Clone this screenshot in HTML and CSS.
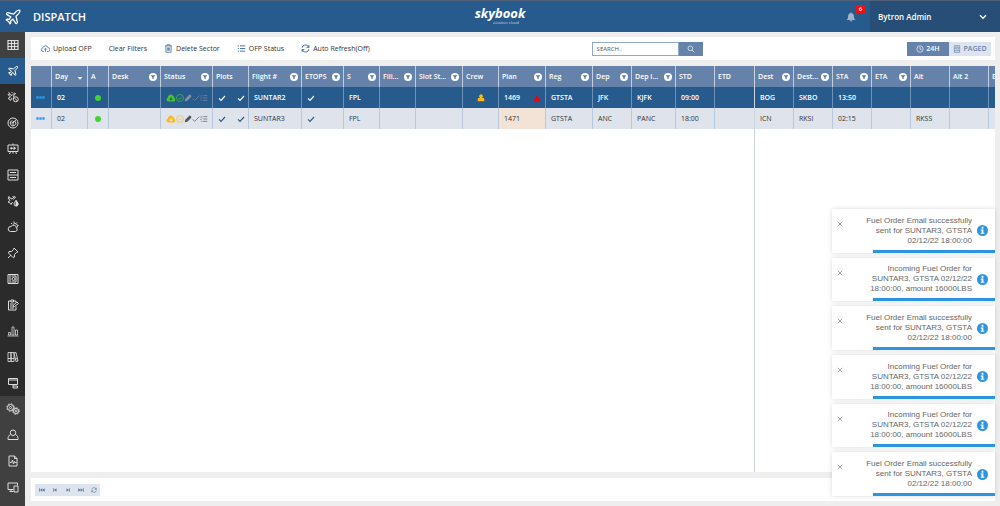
FILE: index.html
```html
<!DOCTYPE html>
<html lang="en">
<head>
<meta charset="utf-8">
<title>Dispatch - skybook</title>
<link rel="stylesheet" href="styles.css">
</head>
<body>
<svg class="sprite" aria-hidden="true">
  <symbol id="plane" viewBox="0 0 24 24"><path d="M17.8 19.2 16 11l3.500-3.500C21 6 21.500 4 21 3c-1-.5-3 0-4.500 1.500L13 8 4.800 6.200c-.5-.1-.9.1-1.100.5l-.3.5c-.2.5-.1 1 .3 1.300L9 12l-2 3H4l-1 1 3 2 2 3 1-1v-3l3-2 3.500 5.300c.3.4.8.5 1.300.3l.5-.2c.4-.3.6-.7.5-1.200z"/></symbol>
  <symbol id="grid" viewBox="0 0 24 24"><path stroke-width="2.400" d="M2 3h20v18H2zM2 9h20M2 15h20M9 3v18M15 3v18"/></symbol>
  <symbol id="plane-clock" viewBox="0 0 24 24"><path d="M10 14 7 19l-2-3-3-1 5-3-5-5 2-1 6 3 5-5 2 1-4 5 1 2M3 3l3 2M9 2l2 2"/><circle cx="17.500" cy="16.500" r="5"/><path d="m14 13 7 7"/></symbol>
  <symbol id="radar" viewBox="0 0 24 24"><circle cx="12" cy="12" r="10"/><path d="M12 12 18.500 5M16.500 9a5.500 5.500 0 1 1-6-2M9 12l6-4M12 12v5"/></symbol>
  <symbol id="board" viewBox="0 0 24 24"><path d="M2 4h20v13H2zM12 1v3M7 17l-2 5M17 17l2 5M12 17v4M6 10.500h11M13 7.500l4 3-4 3M8.500 8v5"/></symbol>
  <symbol id="drawers" viewBox="0 0 24 24"><path d="M2 2h20v20H2zM2 12h20M6 7h12M6 17h12"/></symbol>
  <symbol id="plane-fuel" viewBox="0 0 24 24"><path d="M11 14 8 19l-3-4-3-1 4-3-4-5 2-1 6 3 5-5 2 1-4 5M3 3l3 2M11 2l2 2"/><path d="M18 11c2 3 4 4.500 4 7a4 4 0 0 1-8 0c0-2.500 2-4 4-7z"/><path fill="currentColor" d="M18 11c2 3 4 4.500 4 7a4 4 0 0 1-4 4z"/></symbol>
  <symbol id="weather" viewBox="0 0 24 24"><path d="M7 21a5 5 0 1 1 1-10 6 6 0 0 1 11 3 4 4 0 0 1-2 7zM12 7a5 5 0 0 1 8 6M14 1v3M20 3l-2 2M23 9h-2M8 4l2 2"/></symbol>
  <symbol id="pin" viewBox="0 0 24 24"><path d="m14 2 8 8-3 1-4 4v5l-3 1-9-9 1-3h5l4-4zM8 16l-6 6"/></symbol>
  <symbol id="safe" viewBox="0 0 24 24"><path d="M2 3h20v18H2zM6 3v18M18 6v12M9 6h9M9 18h9"/><circle cx="13" cy="12" r="3"/></symbol>
  <symbol id="clipboard" viewBox="0 0 24 24"><path d="M8 4H3v18h15v-7M13 4h5v3M8 2h5v4H8zM6 10h7M6 14h5M6 18h8M12 16l1-4 7-6 3 3-8 6z"/></symbol>
  <symbol id="bars" viewBox="0 0 24 24"><path stroke-width="1.500" d="M1 22h22M3 15h4v5H3zM10 4h4v16h-4zM17 10h4v10h-4z"/></symbol>
  <symbol id="books" viewBox="0 0 24 24"><path stroke-width="1.700" d="M2 3h6v18H2zM8 3h6v18H8zM14 4l4-1 4 17-4 1zM2 15h12M16 16l5-1"/></symbol>
  <symbol id="monitor" viewBox="0 0 24 24"><path d="M3 3h18v12H3zM3 6h18M12 15v3M12 18h9v4h-9z"/></symbol>
  <symbol id="gears" viewBox="0 0 28 24"><circle cx="9" cy="9" r="6"/><circle cx="9" cy="9" r="7.500" stroke-dasharray="3 2.900"/><circle cx="9" cy="9" r="2"/><circle cx="20" cy="16" r="5"/><circle cx="20" cy="16" r="6.500" stroke-dasharray="3 2.100"/><circle cx="20" cy="16" r="1.500"/></symbol>
  <symbol id="person" viewBox="0 0 24 24"><circle cx="12" cy="7.500" r="5.500"/><path d="M7 11c-4 2-5 4-5 10h20c0-6-1-8-5-10"/></symbol>
  <symbol id="report" viewBox="0 0 24 24"><path d="M4 2h11l5 5v15H4zM15 2v5h5M6 15h3l2-5 2 8 2-5 1 2h3"/></symbol>
  <symbol id="devices" viewBox="0 0 24 24"><path d="M13 17H2V4h19v5M8 17v4M5 21h8M14 10h8v12h-8z"/></symbol>
  <symbol id="cloud-up" viewBox="0 0 24 24"><path d="M8 20H6A5 5 0 0 1 5.500 10 7 7 0 0 1 19 10a5 5 0 0 1 0 10h-3M12 21v-9M8.500 15l3.500-4 3.500 4"/></symbol>
  <symbol id="cloud" viewBox="0 0 24 20"><path fill="currentColor" stroke="none" fill-rule="evenodd" d="M6 19A5.500 5.500 0 0 1 4 8.500 7 7 0 0 1 17 5a5 5 0 0 1 3.500 5A5 5 0 0 1 19 19zM10.500 8v4H7l5 5 5-5h-3.500V8z"/></symbol>
  <symbol id="trash" viewBox="0 0 24 24"><path d="M3 5h18M8 5V2h8v3M5 5v17h14V5M9 9v9M12 9v9M15 9v9"/></symbol>
  <symbol id="list" viewBox="0 0 24 24"><path stroke-width="2.400" d="M8 5h14M8 12h14M8 19h14M2 5h3M2 12h3M2 19h3"/></symbol>
  <symbol id="checklist" viewBox="0 0 24 24"><path d="M10 5h12M10 12h12M8 19h14M1 5l2 2 4-4M1 12l2 2 4-4M2 19h3"/></symbol>
  <symbol id="refresh" viewBox="0 0 24 24"><path stroke-width="2.500" d="M3 10a9 9 0 0 1 16-4l2 3M21 3v6h-6M21 14a9 9 0 0 1-16 4l-2-3M3 21v-6h6"/></symbol>
  <symbol id="search" viewBox="0 0 24 24"><circle cx="10" cy="10" r="7"/><path d="m15 15 7 7"/></symbol>
  <symbol id="clock" viewBox="0 0 24 24"><circle cx="12" cy="12" r="9.500"/><path d="M12 6v7h5"/></symbol>
  <symbol id="page" viewBox="0 0 24 24"><path d="M4 2h16v20H4zM4 17h16M8 6h8v6H8z"/></symbol>
  <symbol id="bell" viewBox="0 0 24 24"><path fill="currentColor" stroke="none" d="M12 1c1 0 2 1 2 2 4 1 5 4 5 7 0 5 1 6 3 8v1H2v-1c2-2 3-3 3-8 0-3 1-6 5-7 0-1 1-2 2-2zM9 20h6a3 3 0 0 1-6 0z"/></symbol>
  <symbol id="chevron" viewBox="0 0 24 24"><path stroke-width="4" d="m3 7 9 9 9-9"/></symbol>
  <symbol id="funnel" viewBox="0 0 24 24"><circle cx="12" cy="12" r="12" fill="#fff" stroke="none"/><path fill="#5d7ba5" stroke="none" d="M5 7h14l-5 6v6l-4-2v-4z"/></symbol>
  <symbol id="tick" viewBox="0 0 24 24"><path stroke-width="3.500" d="m3 13 6 6L21 6"/></symbol>
  <symbol id="tick-thin" viewBox="0 0 24 24"><path d="m2 13 6 6L22 5"/></symbol>
  <symbol id="tick-circle" viewBox="0 0 24 24"><circle cx="12" cy="12" r="10.500"/><path d="m7 12 4 4 6-7"/></symbol>
  <symbol id="pencil" viewBox="0 0 24 24"><path fill="currentColor" stroke="none" d="m2 22 2-8L16 2c2-1 7 3 6 6L10 20z"/></symbol>
  <symbol id="user" viewBox="0 0 24 24"><path fill="currentColor" stroke="none" d="M12 1a6 6 0 0 1 3 11h3c3 0 4 2 4 5v5H2v-5c0-3 1-5 4-5h3a6 6 0 0 1 3-11z"/></symbol>
  <symbol id="warn" viewBox="0 0 24 24"><path fill="#e30613" stroke="none" d="M12 2 23 22H1z"/></symbol>
  <symbol id="dots" viewBox="0 0 27 9"><path fill="#2f9be8" stroke="none" d="M1 1h7v7H1zM10 1h7v7h-7zM19 1h7v7h-7z"/></symbol>
  <symbol id="sort" viewBox="0 0 24 24"><path fill="currentColor" stroke="none" d="M5 12h14l-7 8z"/></symbol>
  <symbol id="first" viewBox="0 0 24 24"><path fill="currentColor" stroke="none" d="M1 5h3v14H1zM13 5v14l-9-7zM23 5v14l-10-7z"/></symbol>
  <symbol id="prev" viewBox="0 0 24 24"><path fill="currentColor" stroke="none" d="M5 5h3v14H5zM18 5v14L8 12z"/></symbol>
  <symbol id="next" viewBox="0 0 24 24"><path fill="currentColor" stroke="none" d="M19 5h-3v14h3zM6 5v14l10-7z"/></symbol>
  <symbol id="last" viewBox="0 0 24 24"><path fill="currentColor" stroke="none" d="M23 5h-3v14h3zM11 5v14l9-7zM1 5v14l10-7z"/></symbol>
  <symbol id="info" viewBox="0 0 24 24"><circle cx="12" cy="12" r="12" fill="#2d94df" stroke="none"/><path fill="#fff" stroke="none" d="M10 4h4v4h-4zM8 10h6v7h2v2H8v-2h2v-5H8z"/></symbol>
  <symbol id="close" viewBox="0 0 24 24"><path stroke-width="3.500" d="m3 3 18 18M21 3 3 21"/></symbol>
</svg>

<div class="app">
  <header class="header">
    <svg class="icon brand"><use href="#plane"/></svg>
    <h1 class="title">DISPATCH</h1>
    <div class="logo"><span class="logo-name">skybook</span><span class="logo-sub">aviation cloud</span></div>
    <button class="bell" aria-label="Notifications"><svg class="icon"><use href="#bell"/></svg><span class="badge">6</span></button>
    <button class="account">Bytron Admin<svg class="icon"><use href="#chevron"/></svg></button>
  </header>

  <nav class="sidebar" aria-label="Main">
    <a class="nav light" href="#" aria-label="Grid"><svg class="icon"><use href="#grid"/></svg></a>
    <a class="nav active" href="#" aria-label="Dispatch"><svg class="icon"><use href="#plane"/></svg></a>
    <a class="nav" href="#" aria-label="Schedule"><svg class="icon"><use href="#plane-clock"/></svg></a>
    <a class="nav" href="#" aria-label="Radar"><svg class="icon"><use href="#radar"/></svg></a>
    <a class="nav" href="#" aria-label="Briefing"><svg class="icon"><use href="#board"/></svg></a>
    <a class="nav" href="#" aria-label="Archive"><svg class="icon"><use href="#drawers"/></svg></a>
    <a class="nav" href="#" aria-label="Fuel"><svg class="icon"><use href="#plane-fuel"/></svg></a>
    <a class="nav" href="#" aria-label="Weather"><svg class="icon"><use href="#weather"/></svg></a>
    <a class="nav" href="#" aria-label="Notices"><svg class="icon"><use href="#pin"/></svg></a>
    <a class="nav" href="#" aria-label="Vault"><svg class="icon"><use href="#safe"/></svg></a>
    <a class="nav" href="#" aria-label="Forms"><svg class="icon"><use href="#clipboard"/></svg></a>
    <a class="nav" href="#" aria-label="Statistics"><svg class="icon"><use href="#bars"/></svg></a>
    <a class="nav" href="#" aria-label="Library"><svg class="icon"><use href="#books"/></svg></a>
    <a class="nav" href="#" aria-label="Display"><svg class="icon"><use href="#monitor"/></svg></a>
    <a class="nav light" href="#" aria-label="Settings"><svg class="icon wide"><use href="#gears"/></svg></a>
    <a class="nav light" href="#" aria-label="Users"><svg class="icon"><use href="#person"/></svg></a>
    <a class="nav light" href="#" aria-label="Reports"><svg class="icon"><use href="#report"/></svg></a>
    <a class="nav light" href="#" aria-label="Devices"><svg class="icon"><use href="#devices"/></svg></a>
  </nav>

  <main class="main">
    <div class="toolbar">
      <div class="actions">
        <button class="action"><svg class="icon"><use href="#cloud-up"/></svg>Upload OFP</button>
        <button class="action">Clear Filters</button>
        <button class="action"><svg class="icon"><use href="#trash"/></svg>Delete Sector</button>
        <button class="action"><svg class="icon"><use href="#list"/></svg>OFP Status</button>
        <button class="action"><svg class="icon"><use href="#refresh"/></svg>Auto Refresh(Off)</button>
      </div>
      <form class="search">
        <input class="search-box" type="text" placeholder="SEARCH.." aria-label="Search">
        <button class="search-go" type="button" aria-label="Search"><svg class="icon"><use href="#search"/></svg></button>
      </form>
      <div class="modes">
        <button class="mode on"><svg class="icon"><use href="#clock"/></svg>24H</button>
        <button class="mode"><svg class="icon"><use href="#page"/></svg>PAGED</button>
      </div>
    </div>

    <div class="board">
      <div class="pane fixed">
        <table class="flights">
          <colgroup><col class="w21"><col class="w36"><col class="w21"><col class="w52"><col class="w52"><col class="w36"><col class="w53"><col class="w42"><col class="w36"><col class="w36"><col class="w47"><col class="w36"><col class="w47"><col class="w47"><col class="w39"><col class="w44"><col class="w39"><col class="w39"></colgroup>
          <thead><tr>
            <th></th>
            <th><div class="head">Day<svg class="icon"><use href="#sort"/></svg></div></th>
            <th>A</th>
            <th><div class="head">Desk<svg class="icon"><use href="#funnel"/></svg></div></th>
            <th><div class="head">Status<svg class="icon"><use href="#funnel"/></svg></div></th>
            <th>Plots</th>
            <th><div class="head">Flight #<svg class="icon"><use href="#funnel"/></svg></div></th>
            <th><div class="head">ETOPS<svg class="icon"><use href="#funnel"/></svg></div></th>
            <th><div class="head">S<svg class="icon"><use href="#funnel"/></svg></div></th>
            <th><div class="head">Fili...<svg class="icon"><use href="#funnel"/></svg></div></th>
            <th><div class="head">Slot St...<svg class="icon"><use href="#funnel"/></svg></div></th>
            <th>Crew</th>
            <th><div class="head">Plan<svg class="icon"><use href="#funnel"/></svg></div></th>
            <th><div class="head">Reg<svg class="icon"><use href="#funnel"/></svg></div></th>
            <th><div class="head">Dep<svg class="icon"><use href="#funnel"/></svg></div></th>
            <th><div class="head">Dep I...<svg class="icon"><use href="#funnel"/></svg></div></th>
            <th>STD</th>
            <th>ETD</th>
          </tr></thead>
          <tbody>
            <tr class="selected">
              <td><svg class="icon more"><use href="#dots"/></svg></td><td>02</td><td><span class="dot"></span></td><td></td>
              <td><div class="status"><svg class="icon green"><use href="#cloud"/></svg><svg class="icon green"><use href="#tick-circle"/></svg><svg class="icon"><use href="#pencil"/></svg><svg class="icon"><use href="#tick-thin"/></svg><svg class="icon"><use href="#checklist"/></svg></div></td>
              <td><div class="ticks"><svg class="icon"><use href="#tick"/></svg><svg class="icon"><use href="#tick"/></svg></div></td>
              <td>SUNTAR2</td><td><div class="ticks"><svg class="icon"><use href="#tick"/></svg></div></td><td>FPL</td><td></td><td></td>
              <td><svg class="icon crew"><use href="#user"/></svg></td>
              <td><div class="plan">1469<svg class="icon"><use href="#warn"/></svg></div></td>
              <td>GTSTA</td><td>JFK</td><td>KJFK</td><td>09:00</td><td></td>
            </tr>
            <tr>
              <td><svg class="icon more"><use href="#dots"/></svg></td><td>02</td><td><span class="dot"></span></td><td></td>
              <td><div class="status"><svg class="icon amber"><use href="#cloud"/></svg><svg class="icon amber"><use href="#tick-circle"/></svg><svg class="icon"><use href="#pencil"/></svg><svg class="icon"><use href="#tick-thin"/></svg><svg class="icon"><use href="#checklist"/></svg></div></td>
              <td><div class="ticks"><svg class="icon"><use href="#tick"/></svg><svg class="icon"><use href="#tick"/></svg></div></td>
              <td>SUNTAR3</td><td><div class="ticks"><svg class="icon"><use href="#tick"/></svg></div></td><td>FPL</td><td></td><td></td><td></td>
              <td class="flagged">1471</td>
              <td>GTSTA</td><td>ANC</td><td>PANC</td><td>18:00</td><td></td>
            </tr>
          </tbody>
        </table>
      </div>
      <div class="pane scroll">
        <table class="flights">
          <colgroup><col class="w39"><col class="w39"><col class="w39"><col class="w39"><col class="w39"><col class="w39"><col class="w39"></colgroup>
          <thead><tr>
            <th><div class="head">Dest<svg class="icon"><use href="#funnel"/></svg></div></th>
            <th><div class="head">Dest...<svg class="icon"><use href="#funnel"/></svg></div></th>
            <th><div class="head">STA<svg class="icon"><use href="#funnel"/></svg></div></th>
            <th><div class="head">ETA<svg class="icon"><use href="#funnel"/></svg></div></th>
            <th>Alt</th><th>Alt 2</th><th>E</th>
          </tr></thead>
          <tbody>
            <tr class="selected"><td>BOG</td><td>SKBO</td><td>13:50</td><td></td><td></td><td></td><td></td></tr>
            <tr><td>ICN</td><td>RKSI</td><td>02:15</td><td></td><td>RKSS</td><td></td><td></td></tr>
          </tbody>
        </table>
      </div>
    </div>

    <footer class="footer">
      <div class="pager">
        <button aria-label="First"><svg class="icon"><use href="#first"/></svg></button>
        <button aria-label="Previous"><svg class="icon"><use href="#prev"/></svg></button>
        <button aria-label="Next"><svg class="icon"><use href="#next"/></svg></button>
        <button aria-label="Last"><svg class="icon"><use href="#last"/></svg></button>
        <button aria-label="Reload"><svg class="icon"><use href="#refresh"/></svg></button>
      </div>
    </footer>
  </main>

  <aside class="toasts" aria-label="Messages">
    <div class="toast"><button class="dismiss" aria-label="Dismiss"><svg class="icon"><use href="#close"/></svg></button><p>Fuel Order Email successfully<br>sent for SUNTAR3, GTSTA<br>02/12/22 18:00:00</p><svg class="icon info"><use href="#info"/></svg></div>
    <div class="toast"><button class="dismiss" aria-label="Dismiss"><svg class="icon"><use href="#close"/></svg></button><p>Incoming Fuel Order for<br>SUNTAR3, GTSTA 02/12/22<br>18:00:00, amount 16000LBS</p><svg class="icon info"><use href="#info"/></svg></div>
    <div class="toast"><button class="dismiss" aria-label="Dismiss"><svg class="icon"><use href="#close"/></svg></button><p>Fuel Order Email successfully<br>sent for SUNTAR3, GTSTA<br>02/12/22 18:00:00</p><svg class="icon info"><use href="#info"/></svg></div>
    <div class="toast"><button class="dismiss" aria-label="Dismiss"><svg class="icon"><use href="#close"/></svg></button><p>Incoming Fuel Order for<br>SUNTAR3, GTSTA 02/12/22<br>18:00:00, amount 16000LBS</p><svg class="icon info"><use href="#info"/></svg></div>
    <div class="toast"><button class="dismiss" aria-label="Dismiss"><svg class="icon"><use href="#close"/></svg></button><p>Incoming Fuel Order for<br>SUNTAR3, GTSTA 02/12/22<br>18:00:00, amount 16000LBS</p><svg class="icon info"><use href="#info"/></svg></div>
    <div class="toast"><button class="dismiss" aria-label="Dismiss"><svg class="icon"><use href="#close"/></svg></button><p>Fuel Order Email successfully<br>sent for SUNTAR3, GTSTA<br>02/12/22 18:00:00</p><svg class="icon info"><use href="#info"/></svg></div>
  </aside>
</div>
</body>
</html>
```

FILE: styles.css
```css
* { box-sizing: border-box; }
body { margin: 0; font-family: "Open Sans", "Noto Sans", sans-serif; font-size: 7px; color: #333; }
button { margin: 0; padding: 0; border: 0; background: none; font: inherit; color: inherit; }
p, h1 { margin: 0; }
.sprite { position: absolute; width: 0; height: 0; }
.icon { display: block; flex: none; width: 8px; height: 8px; fill: none; stroke: currentColor; stroke-width: 2; }

.app { position: relative; display: grid; grid-template: auto 1fr / 25px 1fr; height: 100vh; overflow: hidden; background: #eee; }

.header { position: relative; grid-column: 1 / -1; display: grid; grid-template-columns: 25px 1fr 24px 130px; align-items: center; height: 32px; border-top: 1px solid #526078; background: #285b8d; color: #fff; }
.brand { width: 18px; height: 18px; margin-left: 4px; stroke-width: 1.700; }
.title { padding-left: 8px; font-size: 11px; font-weight: 600; }
.logo { position: absolute; left: 0; right: 0; top: 5px; display: flex; flex-direction: column; align-items: center; pointer-events: none; }
.logo-name { font-size: 13px; line-height: 15px; font-weight: 700; font-style: italic; }
.logo-sub { padding-left: 12px; font-size: 4px; line-height: 4px; color: #c5d5e5; }
.bell { position: relative; width: 12px; height: 26px; color: #9fb2c8; }
.bell .icon { width: 10px; height: 10px; }
.badge { position: absolute; left: 10px; top: 1px; width: 9px; border-radius: 1px; background: #f40f0f; color: #fff; font-size: 6px; font-weight: 600; line-height: 9px; }
.account { display: flex; align-items: center; justify-content: space-between; height: 31px; padding: 0 13px 0 8px; background: #274e76; font-size: 8px; font-weight: 600; }

.sidebar { display: flex; flex-direction: column; background: #404040; }
.nav { display: flex; align-items: center; justify-content: center; height: 26px; flex: none; background: #2b2b2b; color: #ddd; }
.nav .icon { width: 12px; height: 12px; }
.nav .wide { width: 14px; }
.nav.light { background: #404040; }
.nav.active { background: #285b8d; color: #fff; }

.main { display: flex; flex-direction: column; gap: 6px; min-width: 0; padding: 5px 5px 5px 6px; }
.toolbar { display: grid; grid-template-columns: 21fr 111px 11fr; align-items: center; height: 23px; padding: 0 4px 0 10px; background: #fff; }
.actions { display: flex; gap: 17px; }
.action { display: flex; align-items: center; gap: 3px; white-space: nowrap; }
.action .icon { width: 9px; height: 9px; color: #36679b; }
.search { display: flex; height: 14px; }
.search-box { flex: 1; min-width: 0; padding: 0 4px; border: 1px solid #8ea9c9; border-radius: 0; font: inherit; font-size: 6px; }
.search-box::placeholder { color: #555; opacity: 1; }
.search-go { display: flex; align-items: center; justify-content: center; width: 24px; background: #6582aa; color: #fff; }
.modes { display: flex; justify-content: flex-end; }
.mode { display: flex; align-items: center; justify-content: center; gap: 2px; width: 42px; height: 14px; background: #dee4ed; color: #6582aa; font-weight: 600; }
.mode.on { background: #6582aa; color: #fff; }

.board { flex: 1; display: flex; min-height: 0; background: #fff; }
.pane { overflow: hidden; }
.fixed { flex: none; border-right: 1px solid #ccd3db; }
.scroll { flex: 1; }
.flights { width: 0; table-layout: fixed; border-collapse: separate; border-spacing: 0; }
.w21 { width: 21px; }
.w36 { width: 36px; }
.w39 { width: 39px; }
.w42 { width: 42px; }
.w44 { width: 44px; }
.w47 { width: 47px; }
.w52 { width: 52px; }
.w53 { width: 53px; }
th, td { height: 21px; padding: 0 0 0 5px; overflow: hidden; text-align: left; vertical-align: middle; white-space: nowrap; }
th { padding: 0 3px; border-right: 1px solid #c2cedd; background: #6582aa; color: #fff; font-weight: 600; }
td { border-right: 1px solid #b6c8dc; background: #dfe4ec; }
.selected td { background: #285b8d; border-right-color: #6d92b8; color: #fff; font-weight: 600; }
.fixed th:last-child, .fixed td:last-child { border-right: 0; }
.head { display: flex; align-items: center; justify-content: space-between; }
td.flagged { background: #f2e3d6; }
.more { width: 9px; height: 3px; }
.dot { display: block; width: 6px; height: 6px; margin-left: 2px; border-radius: 50%; background: #43d52d; }
.status { display: flex; align-items: center; color: #555; }
.status .icon:first-child { width: 10px; }
.selected .status { color: #8192a5; }
.status .green { color: #43c72d; }
.status .amber { color: #fdb913; }
.ticks { display: flex; gap: 11px; color: #285b8d; }
.selected .ticks { color: #fff; }
.crew { margin-left: 9px; color: #fdb913; }
.plan { display: flex; align-items: center; justify-content: space-between; padding-right: 4px; }

.footer { display: flex; align-items: center; height: 23px; padding-left: 4px; background: #fff; }
.pager { display: flex; background: #dee4ed; color: #5579a5; }
.pager button { display: flex; align-items: center; justify-content: center; width: 13px; height: 12px; }
.pager .icon { width: 6px; height: 6px; }

.toasts { position: absolute; top: 209px; right: 5px; bottom: 10px; display: grid; grid-auto-rows: 1fr; gap: 5px; width: 163px; }
.toast { position: relative; display: grid; grid-template-columns: 8px 1fr 11px; align-items: center; gap: 5px; padding: 0 7px 0 4px; background: #fff; border-radius: 1px; box-shadow: 0 0 5px rgba(0, 0, 0, .15); color: #666; font-family: "Liberation Sans", Arial, sans-serif; font-size: 8px; line-height: 10px; text-align: right; }
.toast::after { content: ""; position: absolute; right: 0; bottom: 0; width: 75%; height: 3px; background: #2d94df; }
.dismiss { align-self: start; padding: 12px 0 0 1px; color: #999; }
.dismiss .icon { width: 6px; height: 6px; }
.toast .info { width: 11px; height: 11px; }
```
